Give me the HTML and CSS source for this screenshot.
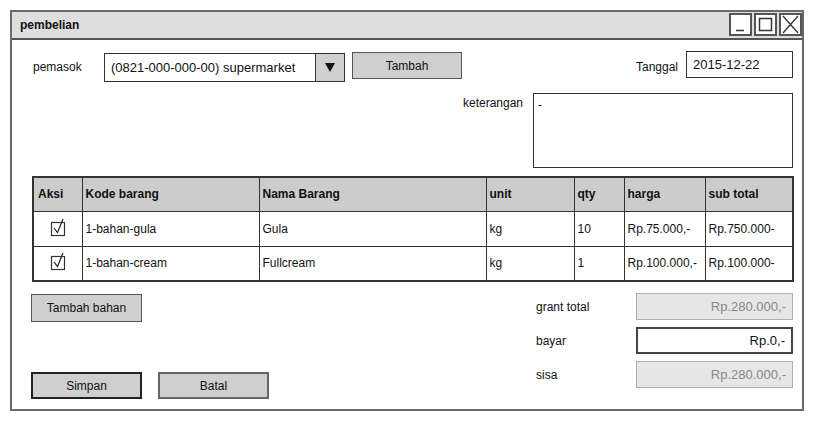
FILE: index.html
```
<!DOCTYPE html>
<html>
<head>
<meta charset="utf-8">
<link rel="stylesheet" href="styles.css">
</head>
<body>
<div class="window">
  <div class="titlebar">
    <span class="title">pembelian</span>
    <div class="controls">
      <span class="ctl"><svg width="19" height="19" viewBox="0 0 19 19"><path d="M5 15.5 H13" stroke="#333" stroke-width="1.5"/></svg></span>
      <span class="ctl"><svg width="19" height="19" viewBox="0 0 19 19"><rect x="3.5" y="3.5" width="12" height="12" fill="none" stroke="#333" stroke-width="1.5"/></svg></span>
      <span class="ctl"><svg width="19" height="19" viewBox="0 0 19 19"><path d="M2 1 L17 18 M17 1 L2 18" stroke="#333" stroke-width="1.3"/></svg></span>
    </div>
  </div>
  <div class="content">
    <div class="row1">
      <span class="lbl pemasok">pemasok</span>
      <div class="combo">
        <span class="combo-text">(0821-000-000-00) supermarket</span>
        <span class="combo-btn"><svg width="10" height="9" viewBox="0 0 10 9"><path d="M0 0 H10 L5 9 Z" fill="#111"/></svg></span>
      </div>
      <button class="btn btn-tambah">Tambah</button>
      <span class="spacer"></span>
      <span class="lbl">Tanggal</span>
      <div class="field date">2015-12-22</div>
    </div>
    <div class="row2">
      <span class="lbl ket">keterangan</span>
      <div class="textarea">-</div>
    </div>
    <table class="grid">
      <thead>
        <tr>
          <th class="c1">Aksi</th>
          <th class="c2">Kode barang</th>
          <th class="c3">Nama Barang</th>
          <th class="c4">unit</th>
          <th class="c5">qty</th>
          <th class="c6">harga</th>
          <th class="c7">sub total</th>
        </tr>
      </thead>
      <tbody>
        <tr>
          <td class="chk"><svg width="18" height="20" viewBox="0 0 18 20"><rect x="2.5" y="5.5" width="13" height="13" fill="none" stroke="#333" stroke-width="1.2"/><path d="M5 11 L8.5 15.5 L14 2" fill="none" stroke="#222" stroke-width="1.2"/></svg></td>
          <td>1-bahan-gula</td>
          <td>Gula</td>
          <td>kg</td>
          <td>10</td>
          <td>Rp.75.000,-</td>
          <td>Rp.750.000-</td>
        </tr>
        <tr>
          <td class="chk"><svg width="18" height="20" viewBox="0 0 18 20"><rect x="2.5" y="5.5" width="13" height="13" fill="none" stroke="#333" stroke-width="1.2"/><path d="M5 11 L8.5 15.5 L14 2" fill="none" stroke="#222" stroke-width="1.2"/></svg></td>
          <td>1-bahan-cream</td>
          <td>Fullcream</td>
          <td>kg</td>
          <td>1</td>
          <td>Rp.100.000,-</td>
          <td>Rp.100.000-</td>
        </tr>
      </tbody>
    </table>
    <div class="bottom">
      <div class="left">
        <button class="btn btn-bahan">Tambah bahan</button>
        <div class="actions">
          <button class="btn btn-simpan">Simpan</button>
          <button class="btn btn-batal">Batal</button>
        </div>
      </div>
      <div class="totals">
        <span class="lbl tl">grant total</span>
        <div class="field num disabled">Rp.280.000,-</div>
        <span class="lbl tl">bayar</span>
        <div class="field num active">Rp.0,-</div>
        <span class="lbl tl">sisa</span>
        <div class="field num disabled">Rp.280.000,-</div>
      </div>
    </div>
  </div>
</div>
</body>
</html>
```
FILE: styles.css
```
* { box-sizing: border-box; }
body {
  margin: 0;
  background: #fff;
  font-family: "Liberation Sans", Arial, sans-serif;
  font-size: 12px;
  color: #111;
}
.window {
  margin: 10px 0 0 10px;
  width: 794px;
  height: 401px;
  border: 2px solid #6a6a6a;
  display: flex;
  flex-direction: column;
}
.titlebar {
  height: 28px;
  background: #dedede;
  border-bottom: 2px solid #555;
  display: flex;
  align-items: center;
  justify-content: space-between;
  padding-left: 8px;
}
.title {
  font-weight: bold;
  font-size: 12px;
}
.controls {
  display: flex;
  gap: 2px;
  align-self: flex-start;
  margin-top: 1px;
}
.ctl {
  width: 23px;
  height: 23px;
  border: 2px solid #555;
  background: #fff;
  display: flex;
  align-items: center;
  justify-content: center;
}
.ctl svg { display: block; }
.content {
  padding: 12px 9px 0 20px;
  flex: 1;
}
.row1 {
  display: flex;
  align-items: center;
  height: 30px;
}
.lbl { font-size: 12px; }
.pemasok {
  width: 72px;
  padding-left: 1px;
}
.combo {
  width: 241px;
  height: 29px;
  border: 1px solid #333;
  display: flex;
  align-items: stretch;
  background: #fff;
}
.combo-text {
  flex: 1;
  display: flex;
  align-items: center;
  padding-left: 6px;
  font-size: 13px;
}
.combo-btn {
  width: 29px;
  background: #d0d0d0;
  border-left: 1px solid #333;
  display: flex;
  align-items: center;
  justify-content: center;
}
.btn {
  font-family: "Liberation Sans", Arial, sans-serif;
  font-size: 12px;
  color: #111;
  background: #cfcfcf;
  border: 1px solid #555;
  padding: 0;
  border-radius: 0;
}
.btn-tambah {
  width: 110px;
  height: 27px;
  margin-left: 7px;
  align-self: flex-start;
}
.spacer { flex: 1; }
.field {
  height: 27px;
  border: 1px solid #333;
  background: #fff;
  display: flex;
  align-items: center;
  padding: 0 6px;
  font-size: 13px;
}
.date {
  width: 107px;
  margin-left: 8px;
  align-self: flex-start;
  margin-top: -1px;
}
.row2 {
  margin-top: 11px;
  display: flex;
  justify-content: flex-end;
  align-items: flex-start;
}
.ket { padding-top: 3px; margin-right: 10px; }
.textarea {
  width: 260px;
  height: 75px;
  border: 1px solid #333;
  padding: 4px 4px;
  font-size: 12px;
  line-height: 14px;
}
.grid {
  margin-top: 8px;
  width: 760px;
  border-collapse: collapse;
  border: 2px solid #333;
  table-layout: fixed;
}
.grid th, .grid td {
  border: 1px solid #333;
  text-align: left;
  padding: 0 3px;
  font-size: 12px;
  white-space: nowrap;
  overflow: hidden;
}
.grid th {
  background: #cccccc;
  font-weight: bold;
  height: 34px;
}
.grid td { height: 35px; }
.grid th.c1 { width: 49px; padding-left: 4px; }
.grid th.c2 { width: 177px; }
.grid th.c3 { width: 227px; }
.grid th.c4 { width: 88px; }
.grid th.c5 { width: 50px; }
.grid th.c6 { width: 81px; }
.grid th.c7 { width: 88px; }
.grid td.chk { text-align: center; padding: 0; }
.grid td.chk svg { display: inline-block; vertical-align: middle; margin-top: -4px; }
.bottom {
  margin-top: 11px;
  display: flex;
  justify-content: space-between;
}
.left {
  display: flex;
  flex-direction: column;
  justify-content: space-between;
  height: 106px;
}
.btn-bahan {
  width: 111px;
  height: 28px;
  margin-top: 1px;
  margin-left: -1px;
}
.actions {
  display: flex;
  gap: 16px;
  margin-left: -1px;
}
.btn-simpan {
  width: 111px;
  height: 27px;
  border: 2px solid #222;
}
.btn-batal {
  width: 111px;
  height: 27px;
  border: 2px solid #666;
}
.totals {
  display: grid;
  grid-template-columns: 100px 157px;
  grid-auto-rows: 27px;
  row-gap: 7px;
  align-items: center;
}
.tl { padding-left: 0; }
.num {
  justify-content: flex-end;
}
.disabled {
  background: #e6e6e6;
  border-color: #b0b0b0;
  color: #888;
}
.active {
  border: 2px solid #444;
  color: #111;
}
```
